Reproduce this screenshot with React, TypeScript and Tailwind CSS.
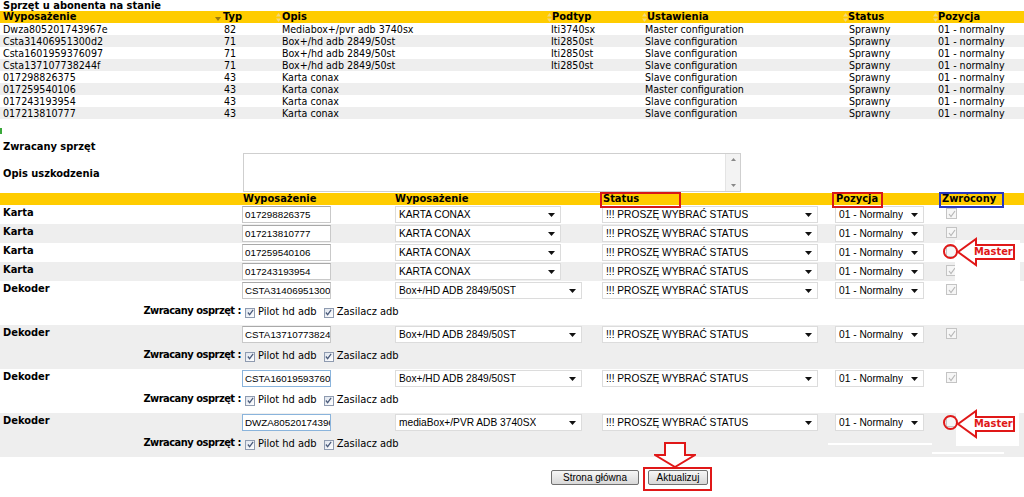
import React from "react";

const TAH = { fontFamily: '"DejaVu Sans Condensed", "Liberation Sans", sans-serif' };
const ARIAL = { fontFamily: '"Liberation Sans", Arial, sans-serif' };

const top = [
  ["Dwza805201743967e", "82", "Mediabox+/pvr adb 3740sx", "Iti3740sx", "Master configuration"],
  ["Csta31406951300d2", "71", "Box+/hd adb 2849/50st", "Iti2850st", "Slave configuration"],
  ["Csta1601959376097", "71", "Box+/hd adb 2849/50st", "Iti2850st", "Slave configuration"],
  ["Csta137107738244f", "71", "Box+/hd adb 2849/50st", "Iti2850st", "Slave configuration"],
  ["017298826375", "43", "Karta conax", "", "Slave configuration"],
  ["017259540106", "43", "Karta conax", "", "Master configuration"],
  ["017243193954", "43", "Karta conax", "", "Slave configuration"],
  ["017213810777", "43", "Karta conax", "", "Slave configuration"],
];

const topCols = "grid grid-cols-[215px_61px_271px_95px_201px_90px_1fr]";

function SortBoth() {
  return (
    <svg width="5" height="9" viewBox="0 0 5 9" className="shrink-0">
      <path d="M2.5 0 L5 3.5 L0 3.5 Z" fill="#f5d87a" />
      <path d="M0 5.5 L5 5.5 L2.5 9 Z" fill="#f5d87a" />
    </svg>
  );
}
function SortDown() {
  return (
    <svg width="6" height="9" viewBox="0 0 6 9" className="shrink-0">
      <path d="M0 4 L6 4 L3 8 Z" fill="#9a7a10" />
    </svg>
  );
}

function Arrow() {
  return (
    <svg width="7" height="4" viewBox="0 0 7 4" className="shrink-0">
      <path d="M0 0 L7 0 L3.5 4 Z" fill="#111" />
    </svg>
  );
}

function Select({ w, text }: { w: string; text: string }) {
  return (
    <div
      className={`${w} h-[17px] bg-white border border-[#dcdcdc] flex items-center justify-between pl-[3px] pr-[5px] text-[10.2px] text-black`}
      style={ARIAL}
    >
      <span className="whitespace-nowrap overflow-hidden leading-[15px]">{text}</span>
      <Arrow />
    </div>
  );
}

function TextIn({ value, blue }: { value: string; blue?: boolean }) {
  return (
    <div
      className={`w-[89px] h-[17px] bg-white border ${blue ? "border-[#8ab4dc]" : "border-[#c9c9c9] border-t-[#a9a9a9]"} pl-[2px] text-[9.8px] text-black leading-[15px] whitespace-nowrap overflow-hidden`}
      style={ARIAL}
    >
      {value}
    </div>
  );
}

function DisabledCheck({ checked }: { checked: boolean }) {
  return (
    <div className="w-[11px] h-[11px] border border-[#c4c4c4] bg-[#f6f6f6] flex items-center justify-center">
      {checked && (
        <svg width="8" height="8" viewBox="0 0 8 8">
          <path d="M1 4 L3 6.5 L7 1" stroke="#b8b8b8" strokeWidth="1.2" fill="none" />
        </svg>
      )}
    </div>
  );
}

function Check() {
  return (
    <div className="w-[10px] h-[10px] border border-[#8f9bb0] bg-gradient-to-br from-[#dfe5ee] to-[#ffffff] flex items-center justify-center shrink-0">
      <svg width="7" height="7" viewBox="0 0 8 8">
        <path d="M1 4 L3 6.5 L7 1" stroke="#4a5a7a" strokeWidth="1.4" fill="none" />
      </svg>
    </div>
  );
}

const formCols = "grid grid-cols-[242px_153px_207px_233px_104px_1fr]";

const cards = [
  { sn: "017298826375", c: true, bg: "bg-white" },
  { sn: "017213810777", c: true, bg: "bg-[#eeeeee]" },
  { sn: "017259540106", c: false, bg: "bg-white" },
  { sn: "017243193954", c: true, bg: "bg-[#eeeeee]" },
];
const decs = [
  { sn: "CSTA314069513000d2", m: "Box+/HD ADB 2849/50ST", c: true, bg: "bg-white", blue: false },
  { sn: "CSTA137107738244f", m: "Box+/HD ADB 2849/50ST", c: true, bg: "bg-[#eeeeee]", blue: false },
  { sn: "CSTA1601959376097", m: "Box+/HD ADB 2849/50ST", c: true, bg: "bg-white", blue: true },
  { sn: "DWZA805201743967E", m: "mediaBox+/PVR ADB 3740SX", c: false, bg: "bg-[#eeeeee]", blue: true },
];

function MasterArrow() {
  return (
    <div className="relative w-[60px] h-[30px]">
      <svg width="60" height="30" viewBox="0 0 60 30" className="absolute left-0 top-0">
        <path d="M1 15 L19 2 L19 8 L57 8 L57 22 L19 22 L19 28 Z" fill="#fff" stroke="#e01818" strokeWidth="2" strokeLinejoin="miter" />
      </svg>
      <span
        className="absolute left-[17px] top-[8px] text-[11px] leading-[14px] font-bold text-[#e01818]"
        style={TAH}
      >
        Master
      </span>
    </div>
  );
}

export default function App() {
  return (
    <div className="relative w-[1024px] h-[497px] bg-white overflow-hidden text-black text-[11px]" style={TAH}>
      {/* Top table */}
      <div className="h-[11px] leading-[11px] font-bold pl-[3px] text-[11px]">Sprzęt u abonenta na stanie</div>
      <div className={`${topCols} h-[12px] leading-[12px] bg-[#ffcc00] font-bold`}>
        <div className="pl-[3px]">Wyposażenie</div>
        <div className="flex items-center gap-[2px]"><SortDown /><span>Typ</span></div>
        <div className="flex items-center gap-[1px]"><SortBoth /><span>Opis</span></div>
        <div className="flex items-center"><SortBoth /><span>Podtyp</span></div>
        <div className="flex items-center"><SortBoth /><span>Ustawienia</span></div>
        <div className="flex items-center"><SortBoth /><span>Status</span></div>
        <div className="flex items-center"><SortBoth /><span>Pozycja</span></div>
      </div>
      {top.map((r, i) => (
        <div key={i} className={`${topCols} h-[12px] leading-[12px] text-[10.6px] ${i % 2 ? "bg-[#eeeeee]" : "bg-white"}`}>
          <div className="pl-[3px]">{r[0]}</div>
          <div className="pl-[9px]">{r[1]}</div>
          <div className="pl-[6px]">{r[2]}</div>
          <div className="pl-[4px]">{r[3]}</div>
          <div className="pl-[3px]">{r[4]}</div>
          <div className="pl-[6px]">Sprawny</div>
          <div className="pl-[5px]">01 - normalny</div>
        </div>
      ))}

      {/* Returned equipment */}
      <div className="mt-[9px] w-[2px] h-[6px] bg-[#3aa83a]" />
      <div className="mt-[7px] h-[12px] leading-[12px] pl-[3px] font-bold">Zwracany sprzęt</div>
      <div className="flex items-center h-[39px]">
        <div className="w-[243px] pl-[3px] font-bold pt-[4px]">Opis uszkodzenia</div>
        <div className="w-[498px] h-[39px] border border-[#cfcfcf] bg-white flex justify-end">
          <div className="w-[15px] h-full bg-[#f3f3f3] border-l border-[#e4e4e4] flex flex-col items-center justify-between py-[4px]">
            <svg width="5" height="3" viewBox="0 0 5 3"><path d="M0 3 L5 3 L2.5 0 Z" fill="#888" /></svg>
            <svg width="5" height="3" viewBox="0 0 5 3"><path d="M0 0 L5 0 L2.5 3 Z" fill="#888" /></svg>
          </div>
        </div>
      </div>

      <div className={`${formCols} mt-[1px] h-[12px] leading-[12px] bg-[#ffcc00] font-bold`}>
        <div />
        <div className="pl-[1px]">Wyposażenie</div>
        <div>Wyposażenie</div>
        <div className="pl-[1px]">Status</div>
        <div className="pl-[1px]">Pozycja</div>
        <div className="pl-[3px]">Zwrócony</div>
      </div>

      {cards.map((r, i) => (
        <div key={i} className={`${formCols} h-[19px] items-start ${r.bg}`}>
          <div className="pl-[3px] pt-[2px] font-bold leading-[12px]">Karta</div>
          <div className="pt-[1px]"><TextIn value={r.sn} /></div>
          <div className="pt-[1px]"><Select w="w-[166px]" text="KARTA CONAX" /></div>
          <div className="pt-[1px]"><Select w="w-[216px]" text="!!! PROSZĘ WYBRAĆ STATUS" /></div>
          <div className="pt-[1px]"><Select w="w-[89px]" text="01 - Normalny" /></div>
          <div className="pt-[3px] pl-[7px]"><DisabledCheck checked={r.c} /></div>
        </div>
      ))}

      {decs.map((r, i) => (
        <div key={i} className={`${r.bg} h-[44px]`}>
          <div className={`${formCols} h-[19px] items-start`}>
            <div className="pl-[3px] pt-[2px] font-bold leading-[12px]">Dekoder</div>
            <div className="pt-[1px]"><TextIn value={r.sn} blue={r.blue} /></div>
            <div className="pt-[1px]"><Select w="w-[187px]" text={r.m} /></div>
            <div className="pt-[1px]"><Select w="w-[216px]" text="!!! PROSZĘ WYBRAĆ STATUS" /></div>
            <div className="pt-[1px]"><Select w="w-[89px]" text="01 - Normalny" /></div>
            <div className="pt-[3px] pl-[7px]"><DisabledCheck checked={r.c} /></div>
          </div>
          <div className="flex items-center h-[25px]">
            <div className="w-[242px] text-right font-bold pr-[1px] pb-[3px] tracking-[-0.5px]">Zwracany osprzęt :</div>
            <div className="flex items-center pl-[3px]">
              <Check />
              <span className="ml-[3px]">Pilot hd adb</span>
              <span className="ml-[7px]"><Check /></span>
              <span className="ml-[3px]">Zasilacz adb</span>
            </div>
          </div>
        </div>
      ))}

      {/* buttons */}
      <div className="mt-[13px] flex items-center pl-[551px] gap-[9px]" style={ARIAL}>
        <button className="h-[15px] w-[88px] border border-[#707070] rounded-[2px] bg-gradient-to-b from-[#f6f6f6] to-[#d8d8d8] text-[10px] leading-[13px] text-black">
          Strona główna
        </button>
        <button className="h-[15px] w-[60px] border border-[#707070] rounded-[2px] bg-gradient-to-b from-[#f6f6f6] to-[#d8d8d8] text-[10px] leading-[13px] text-black">
          Aktualizuj
        </button>
      </div>

      {/* annotations */}
      <div className="absolute left-[600px] top-[192px] w-[81px] h-[16px] border-2 border-[#d81818]" />
      <div className="absolute left-[832px] top-[192px] w-[51px] h-[16px] border-2 border-[#d81818]" />
      <div className="absolute left-[939px] top-[192px] w-[65px] h-[16px] border-2 border-[#2838c0]" />

      <div className="absolute left-[955px] top-[240px] w-[65px] h-[42px] bg-white" />
      <div className="absolute left-[943px] top-[244px] w-[15px] h-[15px] rounded-full border-2 border-[#e01818]" />
      <div className="absolute left-[957px] top-[237px]"><MasterArrow /></div>

      <div className="absolute left-[828px] top-[443px] w-[104px] h-[2px] bg-white" />
      <div className="absolute left-[932px] top-[452px] w-[72px] h-[2px] bg-white" />
      <div className="absolute left-[956px] top-[403px] w-[63px] h-[43px] bg-white" />
      <div className="absolute left-[943px] top-[415px] w-[15px] h-[15px] rounded-full border-2 border-[#e01818]" />
      <div className="absolute left-[957px] top-[409px]"><MasterArrow /></div>

      <svg width="42" height="26" viewBox="0 0 42 26" className="absolute left-[654px] top-[442px]">
        <path d="M11 1 L31 1 L31 13 L41 13 L21 25 L1 13 L11 13 Z" fill="#fff" stroke="#e01818" strokeWidth="2" />
      </svg>
      <div className="absolute left-[643px] top-[467px] w-[69px] h-[24px] border-2 border-[#e01818]" />
    </div>
  );
}
